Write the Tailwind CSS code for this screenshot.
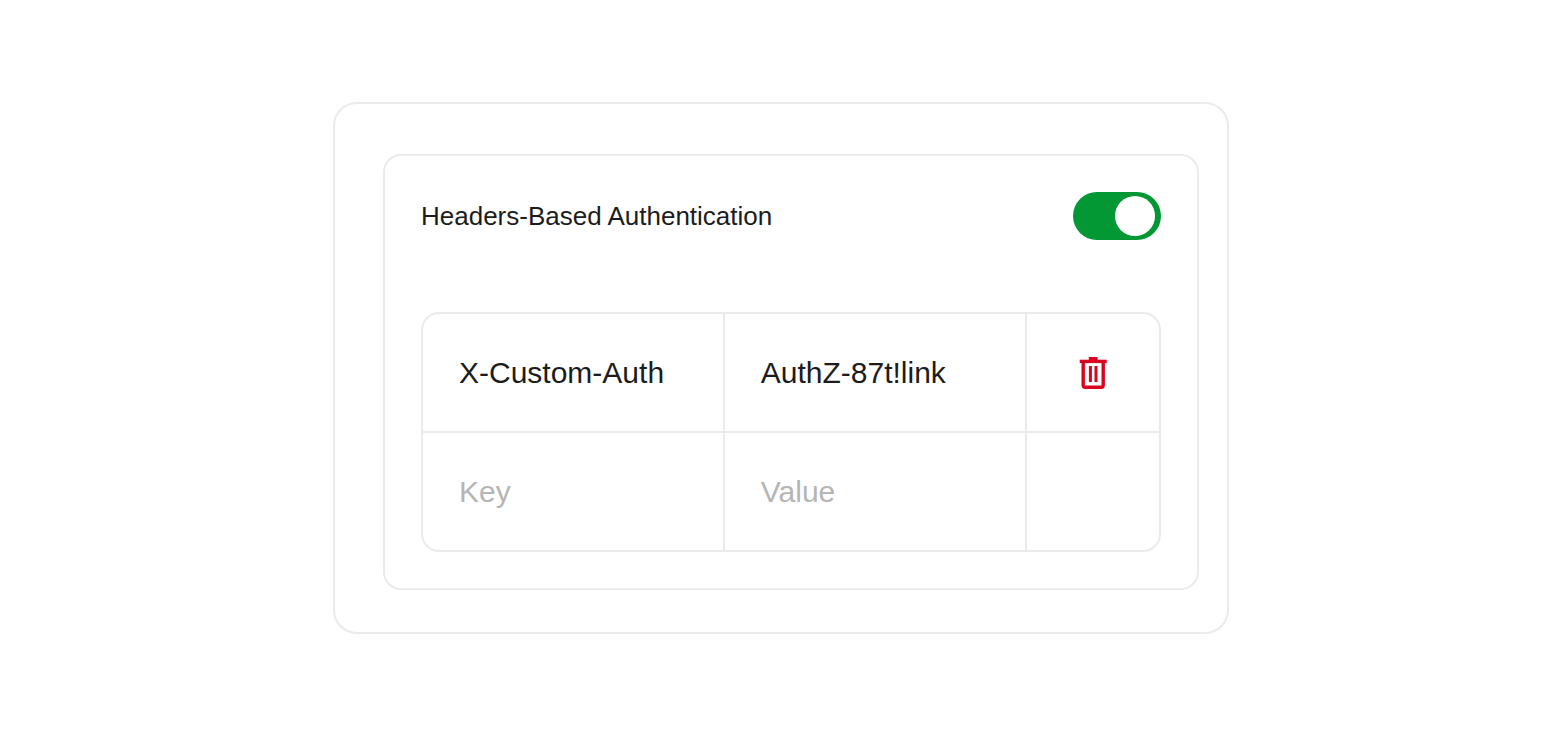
<!DOCTYPE html>
<html lang="en">
<head>
    <meta charset="UTF-8">
    <meta name="viewport" content="width=device-width, initial-scale=1.0">
    <title>Headers-Based Authentication</title>
    <script src="https://cdn.jsdelivr.net/npm/@tailwindcss/browser@4"></script>
</head>
<body class="bg-white text-[#1c1c1c] font-['Liberation_Sans',Arial,sans-serif] flex items-center justify-center min-h-screen">

    <main class="w-full max-w-4xl border-2 border-[#ebebeb] rounded-3xl pl-12 pr-7 pt-[50px] pb-[42px]">
        <form class="border-2 border-[#ebebeb] rounded-[18px] p-9">

            <!-- Title and switch -->
            <div class="flex items-center justify-between mb-[72px]">
                <label for="headersAuth" class="text-[26px] leading-8">Headers-Based Authentication</label>
                <input type="checkbox" role="switch" id="headersAuth" checked
                    class="appearance-none flex items-center w-[88px] h-12 px-[6px] rounded-full bg-gray-300 cursor-pointer checked:bg-[#039833] checked:justify-end before:block before:size-10 before:rounded-full before:bg-white" />
            </div>

            <!-- Header key / value pairs -->
            <table class="w-full table-fixed border-separate border-spacing-0 border-2 border-[#ebebeb] rounded-[18px] text-3xl">
                <colgroup>
                    <col class="w-[41%]">
                    <col class="w-[41%]">
                    <col class="w-[18%]">
                </colgroup>
                <tbody>
                    <tr>
                        <td class="p-0 border-r-2 border-b-2 border-[#ebebeb]">
                            <input type="text" aria-label="Key" value="X-Custom-Auth" class="block w-full h-[117px] px-9 bg-transparent outline-none" />
                        </td>
                        <td class="p-0 border-r-2 border-b-2 border-[#ebebeb]">
                            <input type="text" aria-label="Value" value="AuthZ-87t!link" class="block w-full h-[117px] px-9 bg-transparent outline-none" />
                        </td>
                        <td class="p-0 border-b-2 border-[#ebebeb]">
                            <button type="button" aria-label="Delete header" class="flex items-center justify-center w-full h-[117px] text-[#d9041f] cursor-pointer">
                                <svg class="w-7 h-8" viewBox="0 0 28 32" fill="none" stroke="currentColor" stroke-width="3.4">
                                    <path d="M9.8 1.7h8.8" />
                                    <path d="M0.7 4.4h27" />
                                    <path d="M4.2 4.5v23.8a2 2 0 0 0 2 2h16a2 2 0 0 0 2-2V4.5" />
                                    <path stroke-width="3" d="M11.4 9v16M17 9v16" />
                                </svg>
                            </button>
                        </td>
                    </tr>
                    <tr>
                        <td class="p-0 border-r-2 border-[#ebebeb]">
                            <input type="text" aria-label="New key" placeholder="Key" class="block w-full h-[117px] px-9 bg-transparent outline-none placeholder:text-[#b5b5b5]" />
                        </td>
                        <td class="p-0 border-r-2 border-[#ebebeb]">
                            <input type="text" aria-label="New value" placeholder="Value" class="block w-full h-[117px] px-9 bg-transparent outline-none placeholder:text-[#b5b5b5]" />
                        </td>
                        <td class="p-0"></td>
                    </tr>
                </tbody>
            </table>

        </form>
    </main>

</body>
</html>
